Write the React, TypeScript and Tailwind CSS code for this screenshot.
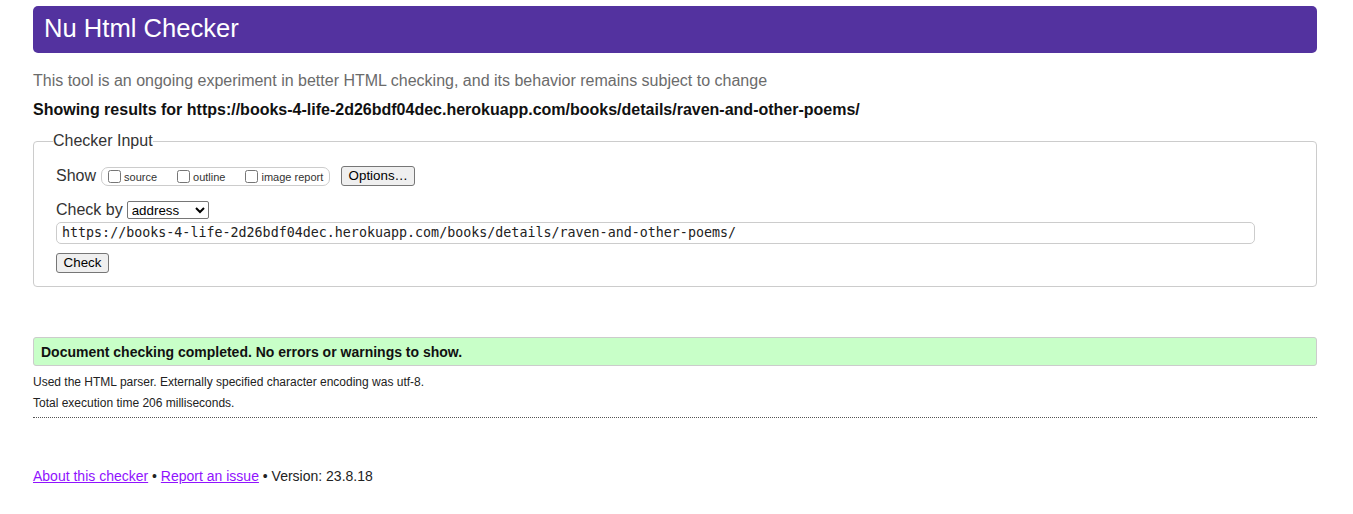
import React from 'react';

const url = 'https://books-4-life-2d26bdf04dec.herokuapp.com/books/details/raven-and-other-poems/';

export default function App() {
  return (
    <div className="min-h-[514px] bg-white text-[#222] font-['Liberation_Sans',Arial,sans-serif]">
      <div className="ml-[33px] w-[1284px] pt-[6px]">
        {/* Title bar */}
        <div className="flex h-[47px] items-center rounded-[5px] bg-[#53329f] pb-[3px] pl-[11px]">
          <h1 className="text-[25.6px] font-normal leading-[normal] text-white">Nu Html Checker</h1>
        </div>

        <p className="mt-[19px] text-[16px] leading-[normal] text-[#6b6b6b]">
          This tool is an ongoing experiment in better HTML checking, and its behavior remains subject to change
        </p>
        <p className="mt-[11px] text-[16px] font-bold leading-[normal] text-[#111]">
          Showing results for {url}
        </p>

        {/* Checker input */}
        <fieldset className="mt-[13px] rounded-[4px] border border-[#cccccc] pb-[13px] pl-[22px]">
          <legend className="ml-[-3px] text-[16px] leading-[normal] text-[#333]">Checker Input</legend>

          <div className="mt-[16px] flex h-[20px] items-center">
            <span className="text-[16px] leading-[normal] text-[#333]">Show</span>
            <div className="ml-[5px] flex h-[19px] items-center gap-[20px] rounded-[7px] border border-[#cccccc] pl-[6px] pr-[6px]">
              {['source', 'outline', 'image report'].map((label) => (
                <label key={label} className="flex items-center">
                  <input type="checkbox" className="h-[13px] w-[13px]" />
                  <span className="ml-[3px] mt-[2px] text-[11px] leading-[normal] text-[#333]">{label}</span>
                </label>
              ))}
            </div>
            <button className="ml-[11px] h-[20px] w-[74px] rounded-[3px] border border-[#767676] bg-[#efefef] text-[13.33px] leading-none text-black">
              Options…
            </button>
          </div>

          <div className="mt-[14px] flex h-[19px] items-center">
            <span className="text-[16px] leading-[normal] text-[#333]">Check by</span>
            <select className="ml-[4px] h-[18px] w-[82px] rounded-[2px] border border-[#767676] bg-white text-[13.33px] leading-none text-black">
              <option>address</option>
            </select>
          </div>

          <div className="mt-[3px] flex h-[22px] w-[1199px] items-center rounded-[5px] border border-[#cccccc] pl-[5px] font-['DejaVu_Sans_Mono',monospace] text-[13.33px] text-[#222]">
            {url}
          </div>

          <button className="mt-[9px] block h-[20px] w-[53px] rounded-[3px] border border-[#767676] bg-[#efefef] text-[13.33px] leading-none text-black">
            Check
          </button>
        </fieldset>

        {/* Result */}
        <div className="mt-[50px] flex h-[29px] items-center rounded-[3px] border border-[#cccccc] bg-[#c8ffc8] px-[7px]">
          <span className="text-[14px] font-bold leading-[normal] text-[#111]">
            Document checking completed. No errors or warnings to show.
          </span>
        </div>
        <p className="mt-[9px] text-[12px] leading-[normal] text-[#222]">
          Used the HTML parser. Externally specified character encoding was utf-8.
        </p>
        <p className="mt-[7px] text-[12px] leading-[normal] text-[#222]">Total execution time 206 milliseconds.</p>
        <div className="mt-[7px] h-0 border-t border-dotted border-[#555]" />

        {/* Footer */}
        <p className="mt-[50px] text-[14px] leading-[normal] text-[#222]">
          <a href="#" className="text-[#9012fe] underline">About this checker</a>
          {' • '}
          <a href="#" className="text-[#9012fe] underline">Report an issue</a>
          {' • Version: 23.8.18'}
        </p>
      </div>
    </div>
  );
}
